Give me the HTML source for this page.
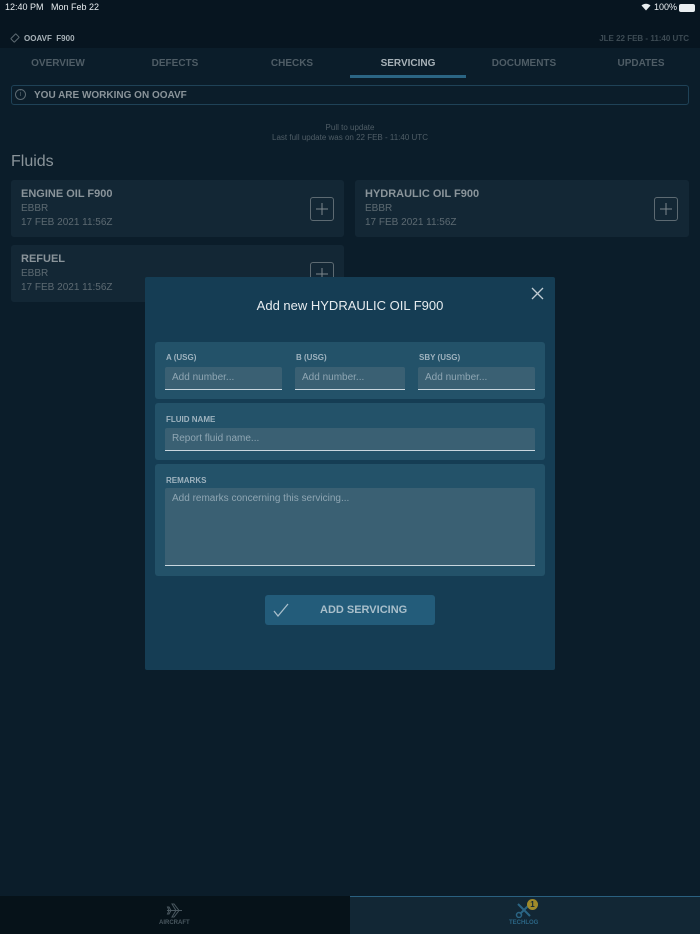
<!DOCTYPE html>
<html><head><meta charset="utf-8"><style>
*{margin:0;padding:0;box-sizing:border-box}
body{width:700px;height:934px;background:#0b1d2a;font-family:"Liberation Sans",sans-serif;position:relative;overflow:hidden;color:#c8d2d8}
.abs{position:absolute}
.hdr{left:0;top:0;width:700px;height:48px;background:#071520}
.tab{position:absolute;top:58px;font-size:10px;font-weight:bold;color:#4f5d66;text-align:center;width:116px}
.card{background:#132735;border-radius:3px}
.ct{font-size:11px;font-weight:bold;color:#8a949a}
.cs{font-size:10px;color:#5d6a72;margin-top:3px}
.plus{position:absolute;width:24px;height:24px;border:1px solid #5d6a72;border-radius:3px}
.modal{left:145px;top:277px;width:410px;height:393px;background:#153d54;border-radius:2px}
.sec{position:absolute;left:10px;width:390px;background:#235269;border-radius:3px}
.lbl{position:absolute;font-size:8px;font-weight:bold;color:#9fb3bf}
.inp{position:absolute;height:23px;background:#3a6073;border-bottom:1px solid #c8d6de;border-radius:2px 2px 0 0;font-size:10px;color:#8fa6b3;padding:5px 7px}
</style></head><body>
<div class="abs hdr"></div>
<div class="abs" style="left:5px;top:2px;font-size:9px;color:#e8edf0">12:40 PM&nbsp;&nbsp;&nbsp;Mon Feb 22</div>
<div class="abs" style="left:654px;top:2px;font-size:9px;color:#e8edf0">100%</div>
<svg class="abs" style="left:641px;top:3px" width="10" height="8" viewBox="0 0 10 8"><path d="M5 7.5L0.5 2.5A6.5 6.5 0 0 1 9.5 2.5Z" fill="#e8edf0"/></svg>
<div class="abs" style="left:679px;top:4px;width:16px;height:8px;background:#e8edf0;border-radius:2px"></div>
<div class="abs" style="left:12px;top:34px;width:6px;height:8px;border:1px solid #5d6a72;transform:rotate(45deg);border-radius:1px"></div>
<div class="abs" style="left:24px;top:34px;font-size:8px;font-weight:bold;color:#a8b2b8">OOAVF&nbsp; F900</div>
<div class="abs" style="right:11px;top:34px;font-size:8px;font-weight:bold;color:#3d4b54">JLE 22 FEB - 11:40 UTC</div>
<div class="tab" style="left:0">OVERVIEW</div>
<div class="tab" style="left:117px">DEFECTS</div>
<div class="tab" style="left:234px">CHECKS</div>
<div class="tab" style="left:350px;color:#a8b2b8">SERVICING</div>
<div class="tab" style="left:466px">DOCUMENTS</div>
<div class="tab" style="left:583px">UPDATES</div>
<div class="abs" style="left:350px;top:75px;width:116px;height:3px;background:#2b6584"></div>
<div class="abs" style="left:11px;top:85px;width:678px;height:20px;border:1px solid #1f4257;border-radius:3px"></div>
<div class="abs" style="left:15px;top:89px;width:11px;height:11px;border:1px solid #5d6a72;border-radius:50%;font-size:7px;color:#5d6a72;text-align:center;line-height:10px">i</div>
<div class="abs" style="left:34px;top:90px;font-size:10px;font-weight:bold;color:#8a949a">YOU ARE WORKING ON OOAVF</div>
<div class="abs" style="left:0;width:700px;top:123px;font-size:8px;color:#4f5d66;text-align:center;line-height:10px">Pull to update<br>Last full update was on 22 FEB - 11:40 UTC</div>
<div class="abs" style="left:11px;top:153px;font-size:16px;color:#8a949a">Fluids</div>
<div class="abs card" style="left:11px;top:180px;width:333px;height:57px;padding:8px 10px"><div class="ct">ENGINE OIL F900</div><div class="cs">EBBR</div><div class="cs">17 FEB 2021 11:56Z</div><div class="plus" style="left:299px;top:17px"><svg width="22" height="22"><path d="M11 5V17M5 11H17" stroke="#7d878d" stroke-width="1"/></svg></div></div>
<div class="abs card" style="left:355px;top:180px;width:334px;height:57px;padding:8px 10px"><div class="ct">HYDRAULIC OIL F900</div><div class="cs">EBBR</div><div class="cs">17 FEB 2021 11:56Z</div><div class="plus" style="left:299px;top:17px"><svg width="22" height="22"><path d="M11 5V17M5 11H17" stroke="#7d878d" stroke-width="1"/></svg></div></div>
<div class="abs card" style="left:11px;top:245px;width:333px;height:57px;padding:8px 10px"><div class="ct">REFUEL</div><div class="cs">EBBR</div><div class="cs">17 FEB 2021 11:56Z</div><div class="plus" style="left:299px;top:17px"><svg width="22" height="22"><path d="M11 5V17M5 11H17" stroke="#7d878d" stroke-width="1"/></svg></div></div>
<div class="abs modal">
<div class="abs" style="left:0;width:410px;top:21px;text-align:center;font-size:13px;color:#e6ecef">Add new HYDRAULIC OIL F900</div>
<svg class="abs" style="left:386px;top:10px" width="13" height="13"><path d="M1 1L12 12M12 1L1 12" stroke="#c0ccd3" stroke-width="1.3"/></svg>
<div class="sec" style="top:65px;height:57px">
<div class="lbl" style="left:11px;top:11px">A (USG)</div><div class="lbl" style="left:141px;top:11px">B (USG)</div><div class="lbl" style="left:264px;top:11px">SBY (USG)</div>
<div class="inp" style="left:10px;top:25px;width:117px">Add number...</div>
<div class="inp" style="left:140px;top:25px;width:110px">Add number...</div>
<div class="inp" style="left:263px;top:25px;width:117px">Add number...</div>
</div>
<div class="sec" style="top:126px;height:57px">
<div class="lbl" style="left:11px;top:12px">FLUID NAME</div>
<div class="inp" style="left:10px;top:25px;width:370px">Report fluid name...</div>
</div>
<div class="sec" style="top:187px;height:112px">
<div class="lbl" style="left:11px;top:12px">REMARKS</div>
<div class="inp" style="left:10px;top:24px;width:370px;height:78px">Add remarks concerning this servicing...</div>
</div>
<div class="abs" style="left:120px;top:318px;width:170px;height:30px;background:#235c7a;border-radius:3px">
<svg class="abs" style="left:8px;top:8px" width="16" height="14"><path d="M1 8L5 13L15 1" stroke="#a9bfcb" stroke-width="1.3" fill="none"/></svg>
<div class="abs" style="left:55px;top:9px;font-size:11px;font-weight:bold;color:#a9bfcb">ADD SERVICING</div>
</div>
</div>
<div class="abs" style="left:0;top:896px;width:350px;height:38px;background:#061219"></div>
<div class="abs" style="left:350px;top:896px;width:350px;height:38px;background:#122735;border-top:1px solid #2a6080"></div>
<svg class="abs" style="left:166px;top:903px" width="18" height="15" viewBox="0 0 18 15"><path d="M1 7.5H16M10 7.5L6 1H8L13 7.5L8 14H6Z M3 7.5L1.5 4H3L5 7.5L3 11H1.5Z" stroke="#4a5860" fill="none" stroke-width="1"/></svg>
<div class="abs" style="left:159px;top:920px;font-size:6px;font-weight:bold;color:#4a5860">AIRCRAFT</div>
<svg class="abs" style="left:515px;top:902px" width="18" height="16"><path d="M3 2L15 14M15 2L5 12" stroke="#2b6584" stroke-width="2"/><circle cx="4" cy="13" r="2.5" stroke="#2b6584" fill="none" stroke-width="1.5"/></svg>
<div class="abs" style="left:527px;top:899px;width:11px;height:11px;border-radius:50%;background:#a08a2a;font-size:8px;color:#122735;text-align:center;line-height:11px;font-weight:bold">1</div>
<div class="abs" style="left:509px;top:920px;font-size:6px;font-weight:bold;color:#2b6584">TECHLOG</div>
</body></html>
